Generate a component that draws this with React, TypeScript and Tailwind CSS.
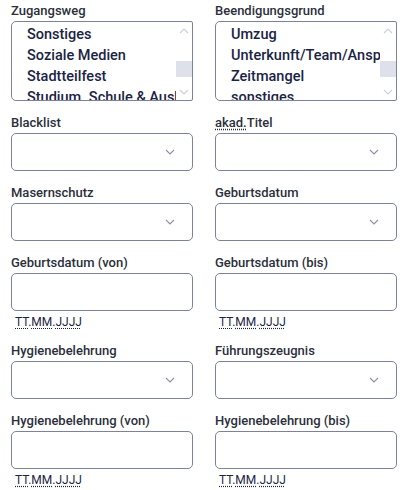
import React from "react";

const font = { fontFamily: "Roboto, 'Noto Sans', sans-serif" };

const Label = ({ children }: { children: React.ReactNode }) => (
    <div className="text-[13px] leading-[16px] font-medium text-[#2b2f3b] mb-[2px] whitespace-nowrap">{children}</div>
);

const Chevron = ({ up = false, className = "" }: { up?: boolean; className?: string }) => (
    <svg width="10" height="6" viewBox="0 0 10 6" className={className}>
        <path d={up ? "M1 5 L5 1 L9 5" : "M1 1 L5 5 L9 1"} fill="none" stroke="currentColor" strokeWidth="1.1" />
    </svg>
);

const ListBox = ({ label, items }: { label: React.ReactNode; items: string[] }) => (
    <div>
        <Label>{label}</Label>
        <div className="h-[80px] border border-[#7c8399] rounded-l-[5px] rounded-r-[2px] flex overflow-hidden bg-white">
            <div className="flex-1 min-w-0 pt-[2px] pl-[15px]">
                {items.map((it) => (
                    <div key={it} className="text-[14.5px] leading-[21px] font-medium text-[#1b2444] whitespace-nowrap overflow-hidden">
                        {it}
                    </div>
                ))}
            </div>
            <div className="w-[16px] flex flex-col items-center text-[#cdd0da]">
                <div className="h-[14px] flex items-center justify-center mt-[2px]">
                    <Chevron up />
                </div>
                <div className="flex-1 w-full flex flex-col">
                    <div className="h-[23px]" />
                    <div className="h-[16px] w-full bg-[#dfe1ea]" />
                </div>
                <div className="h-[14px] flex items-center justify-center mb-[1px]">
                    <Chevron />
                </div>
            </div>
        </div>
    </div>
);

const SelectField = ({ label }: { label: React.ReactNode }) => (
    <div>
        <Label>{label}</Label>
        <div className="h-[38px] border border-[#7c8399] rounded-[5px] bg-white flex items-center justify-end pr-[17px] text-[#8a90a6]">
            <Chevron />
        </div>
    </div>
);

const DateField = ({ label }: { label: string }) => (
    <div>
        <Label>{label}</Label>
        <div className="h-[38px] border border-[#7c8399] rounded-[5px] bg-white" />
        <div className="pl-[4px] mt-[4px] text-[12px] leading-[14px] text-[#1b2444]">
            <abbr title="Tag" className="underline decoration-dotted underline-offset-2">TT</abbr>.
            <abbr title="Monat" className="underline decoration-dotted underline-offset-2">MM</abbr>.
            <abbr title="Jahr" className="underline decoration-dotted underline-offset-2">JJJJ</abbr>
        </div>
    </div>
);

export default function App() {
    return (
        <div style={font} className="w-[404px] h-[490px] bg-white overflow-hidden pl-[11px] pr-[7px] pt-[3px]">
            <div className="grid grid-cols-2 gap-x-[22px] gap-y-[14px]">
                <ListBox label="Zugangsweg" items={["Sonstiges", "Soziale Medien", "Stadtteilfest", "Studium. Schule & Ausbildung"]} />
                <ListBox label="Beendigungsgrund" items={["Umzug", "Unterkunft/Team/Ansprechpartner", "Zeitmangel", "sonstiges"]} />

                <SelectField label="Blacklist" />
                <SelectField label={<><abbr title="akademischer" className="underline decoration-dotted underline-offset-2">akad.</abbr>Titel</>} />

                <SelectField label="Masernschutz" />
                <SelectField label="Geburtsdatum" />

                <DateField label="Geburtsdatum (von)" />
                <DateField label="Geburtsdatum (bis)" />

                <SelectField label="Hygienebelehrung" />
                <SelectField label="Führungszeugnis" />

                <DateField label="Hygienebelehrung (von)" />
                <DateField label="Hygienebelehrung (bis)" />
            </div>
        </div>
    );
}
